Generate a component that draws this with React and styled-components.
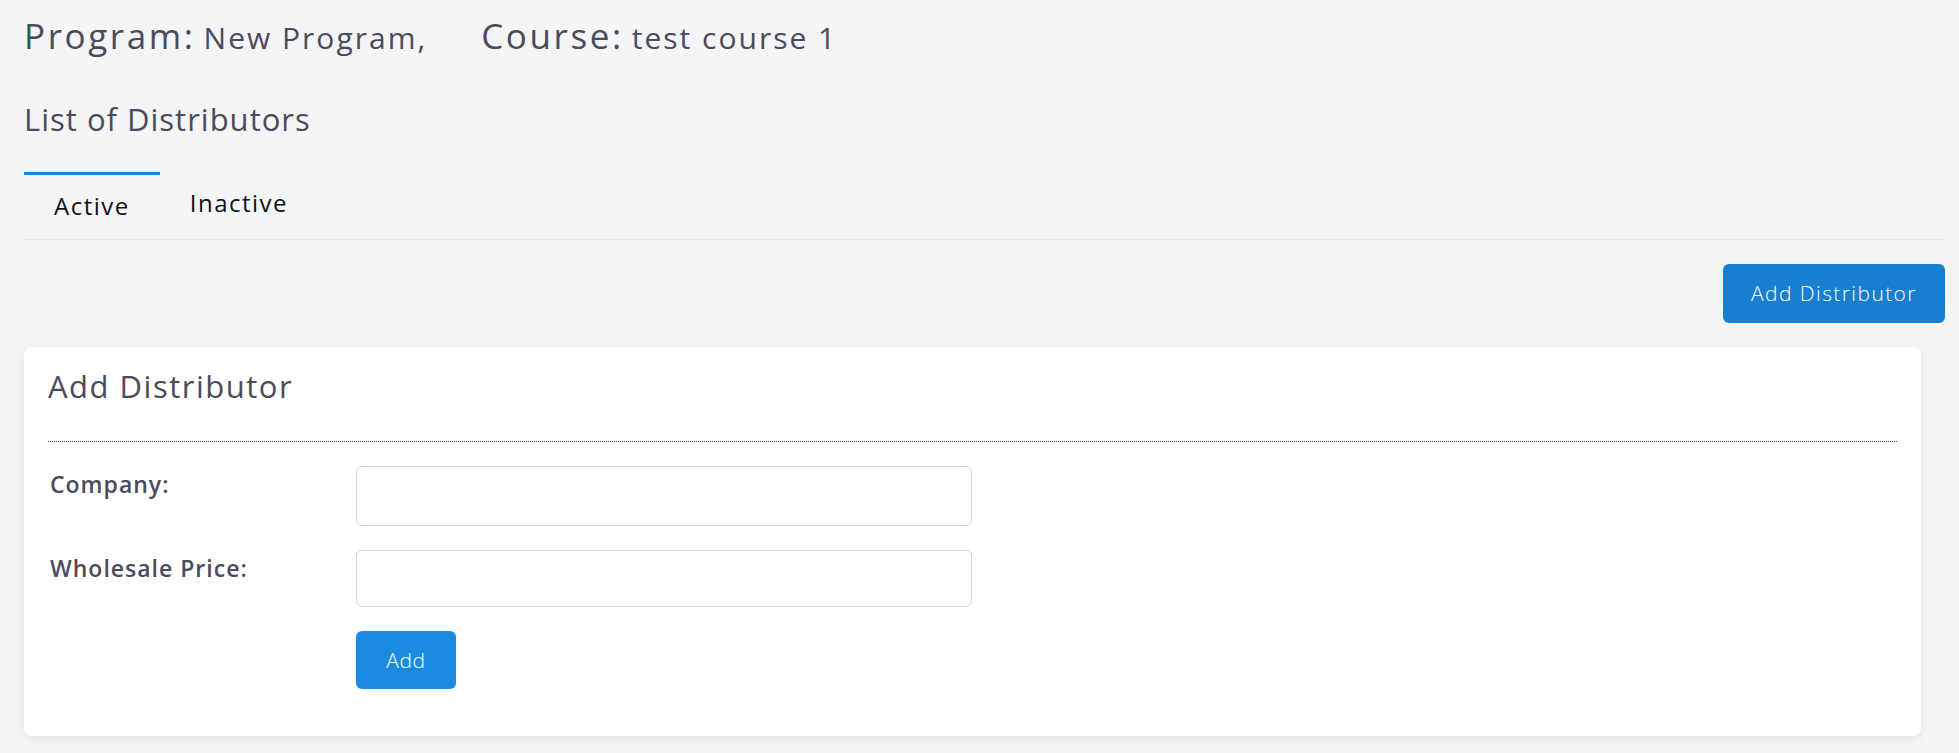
import React, { useState } from 'react';
import styled, { createGlobalStyle } from 'styled-components';

const GlobalStyle = createGlobalStyle`
  * {
    box-sizing: border-box;
  }
  body {
    margin: 0;
    background-color: #f4f5f7;
    font-family: 'Open Sans', 'Liberation Sans', sans-serif;
    color: #4a4b5c;
  }
`;

function App() {
  const [tab, setTab] = useState('active');
  const [company, setCompany] = useState('');
  const [price, setPrice] = useState('');

  return (
    <>
      <GlobalStyle />
      <Page>
        <Heading>
          <HeadItem>
            <HeadLabel>Program:</HeadLabel>
            <HeadValue>New Program,</HeadValue>
          </HeadItem>
          <HeadItem>
            <HeadLabel>Course:</HeadLabel>
            <HeadValue>test course 1</HeadValue>
          </HeadItem>
        </Heading>

        <SectionTitle>List of Distributors</SectionTitle>

        <TabList>
          <Tab active={tab === 'active'} onClick={() => setTab('active')}>
            Active
          </Tab>
          <Tab active={tab === 'inactive'} onClick={() => setTab('inactive')}>
            Inactive
          </Tab>
        </TabList>

        <Actions>
          <PrimaryButton>Add Distributor</PrimaryButton>
        </Actions>

        <Card>
          <CardTitle>Add Distributor</CardTitle>
          <Divider />
          <Form onSubmit={(e) => e.preventDefault()}>
            <Label htmlFor='company'>Company:</Label>
            <Input
              id='company'
              type='text'
              value={company}
              onChange={(e) => setCompany(e.target.value)}
            />
            <Label htmlFor='price'>Wholesale Price:</Label>
            <Input
              id='price'
              type='text'
              short
              value={price}
              onChange={(e) => setPrice(e.target.value)}
            />
            <span />
            <div>
              <AddButton type='submit'>Add</AddButton>
            </div>
          </Form>
        </Card>
      </Page>
    </>
  );
}

const Page = styled.div`
  width: 1959px;
  min-height: 753px;
  padding: 15px 14px 0 24px;
`;

const Heading = styled.div`
  display: flex;
  align-items: baseline;
  gap: 54px;
`;

const HeadItem = styled.div`
  display: flex;
  align-items: baseline;
  gap: 8px;
`;

const HeadLabel = styled.span`
  font-size: 35px;
  font-weight: 500;
  letter-spacing: 2.6px;
  line-height: 1.2;
`;

const HeadValue = styled.span`
  font-size: 30px;
  letter-spacing: 2px;
  line-height: 1.2;
`;

const SectionTitle = styled.h2`
  margin: 44px 0 0;
  font-size: 31px;
  font-weight: 400;
  letter-spacing: 1px;
  line-height: 1.2;
`;

const TabList = styled.div`
  display: flex;
  margin-top: 34px;
  border-bottom: 1px solid #e3e5e9;
`;

const Tab = styled.button`
  border: none;
  border-top: 3px solid ${({ active }) => (active ? '#1a87dd' : 'transparent')};
  background: transparent;
  padding: ${({ active }) => (active ? '17px 30px 18px' : '14px 30px 21px')};
  font-family: inherit;
  font-size: 24px;
  letter-spacing: 1.5px;
  color: #111;
  line-height: 1.2;
  cursor: pointer;
`;

const Actions = styled.div`
  display: flex;
  justify-content: flex-end;
  margin-top: 24px;
`;

const PrimaryButton = styled.button`
  width: 222px;
  height: 59px;
  border: none;
  border-radius: 6px;
  background-color: #187ecf;
  color: #fff;
  font-family: inherit;
  font-size: 21px;
  font-weight: 300;
  letter-spacing: 1.4px;
  cursor: pointer;
`;

const Card = styled.div`
  margin: 24px 24px 0 0;
  padding: 21px 24px 47px;
  background-color: #fff;
  border-radius: 8px;
  box-shadow: 0 3px 10px rgba(0, 0, 0, 0.08);
`;

const CardTitle = styled.h3`
  margin: 0;
  font-size: 31px;
  font-weight: 400;
  letter-spacing: 1.5px;
  line-height: 1.2;
`;

const Divider = styled.hr`
  margin: 36px 0 24px;
  border: none;
  border-top: 1px dotted #555;
`;

const Form = styled.form`
  display: grid;
  grid-template-columns: 308px 616px;
  row-gap: 24px;
`;

const Label = styled.label`
  padding: 2px 0 0 2px;
  font-size: 23px;
  font-weight: 600;
  letter-spacing: 1px;
  color: #4a4b5c;
`;

const Input = styled.input`
  height: ${({ short }) => (short ? '57px' : '60px')};
  border: 1px solid #d1d5dc;
  border-radius: 6px;
  padding: 0 14px;
  font-family: inherit;
  font-size: 20px;
  outline: none;
`;

const AddButton = styled.button`
  width: 100px;
  height: 58px;
  border: none;
  border-radius: 6px;
  background-color: #1b8be2;
  color: #fff;
  font-family: inherit;
  font-size: 21px;
  font-weight: 300;
  letter-spacing: 0.6px;
  cursor: pointer;
`;

export default App;
